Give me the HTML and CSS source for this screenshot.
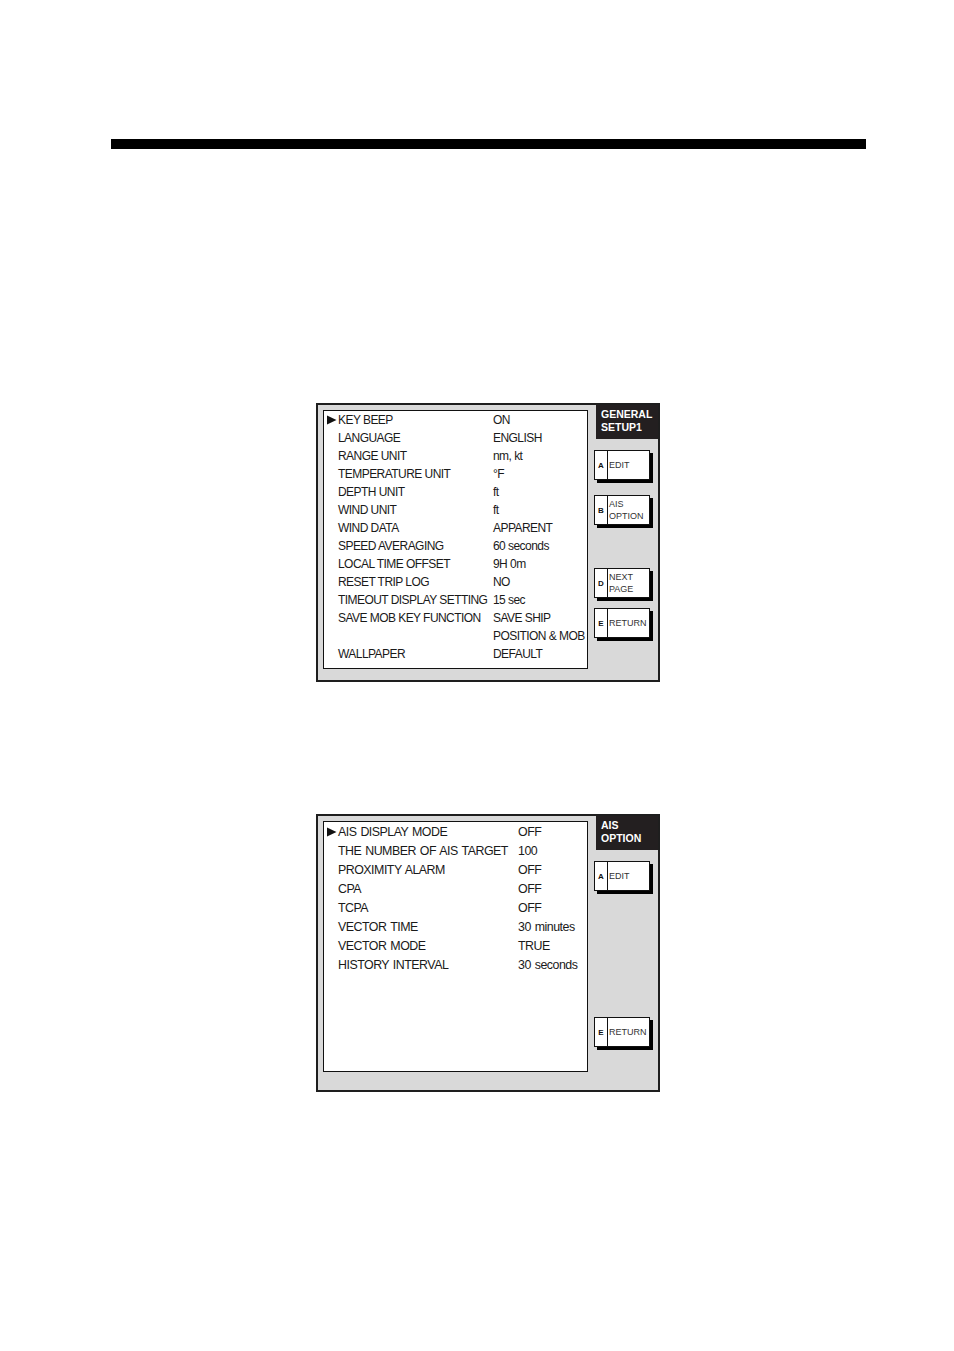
FILE: index.html
```html
<!DOCTYPE html>
<html>
<head>
<meta charset="utf-8">
<link rel="stylesheet" href="styles.css">
</head>
<body>
<div class="topbar"></div>

<div class="panel panel-general">
  <div class="list list-general">
    <div class="row"><span class="cursor"><svg width="10" height="10" viewBox="0 0 10 10"><path d="M0 0.5 L9.5 5 L0 9.5 Z" fill="#111"/></svg></span><span class="label">KEY BEEP</span><span class="value">ON</span></div>
    <div class="row"><span class="cursor"></span><span class="label">LANGUAGE</span><span class="value">ENGLISH</span></div>
    <div class="row"><span class="cursor"></span><span class="label">RANGE UNIT</span><span class="value">nm, kt</span></div>
    <div class="row"><span class="cursor"></span><span class="label">TEMPERATURE UNIT</span><span class="value">°F</span></div>
    <div class="row"><span class="cursor"></span><span class="label">DEPTH UNIT</span><span class="value">ft</span></div>
    <div class="row"><span class="cursor"></span><span class="label">WIND UNIT</span><span class="value">ft</span></div>
    <div class="row"><span class="cursor"></span><span class="label">WIND DATA</span><span class="value">APPARENT</span></div>
    <div class="row"><span class="cursor"></span><span class="label">SPEED AVERAGING</span><span class="value">60 seconds</span></div>
    <div class="row"><span class="cursor"></span><span class="label">LOCAL TIME OFFSET</span><span class="value">9H 0m</span></div>
    <div class="row"><span class="cursor"></span><span class="label">RESET TRIP LOG</span><span class="value">NO</span></div>
    <div class="row"><span class="cursor"></span><span class="label">TIMEOUT DISPLAY SETTING</span><span class="value">15 sec</span></div>
    <div class="row"><span class="cursor"></span><span class="label">SAVE MOB KEY FUNCTION</span><span class="value">SAVE SHIP</span></div>
    <div class="row"><span class="cursor"></span><span class="label"></span><span class="value">POSITION &amp; MOB</span></div>
    <div class="row"><span class="cursor"></span><span class="label">WALLPAPER</span><span class="value">DEFAULT</span></div>
  </div>
  <div class="side">
    <div class="title">GENERAL<br>SETUP1</div>
    <div class="key key-first"><span class="k">A</span><span class="t">EDIT</span></div>
    <div class="key key-b"><span class="k">B</span><span class="t">AIS<br>OPTION</span></div>
    <div class="key key-d"><span class="k">D</span><span class="t">NEXT<br>PAGE</span></div>
    <div class="key key-e"><span class="k">E</span><span class="t">RETURN</span></div>
  </div>
</div>

<div class="panel panel-ais">
  <div class="list list-ais">
    <div class="row"><span class="cursor"><svg width="10" height="10" viewBox="0 0 10 10"><path d="M0 0.5 L9.5 5 L0 9.5 Z" fill="#111"/></svg></span><span class="label">AIS DISPLAY MODE</span><span class="value">OFF</span></div>
    <div class="row"><span class="cursor"></span><span class="label">THE NUMBER OF AIS TARGET</span><span class="value">100</span></div>
    <div class="row"><span class="cursor"></span><span class="label">PROXIMITY ALARM</span><span class="value">OFF</span></div>
    <div class="row"><span class="cursor"></span><span class="label">CPA</span><span class="value">OFF</span></div>
    <div class="row"><span class="cursor"></span><span class="label">TCPA</span><span class="value">OFF</span></div>
    <div class="row"><span class="cursor"></span><span class="label">VECTOR TIME</span><span class="value">30 minutes</span></div>
    <div class="row"><span class="cursor"></span><span class="label">VECTOR MODE</span><span class="value">TRUE</span></div>
    <div class="row"><span class="cursor"></span><span class="label">HISTORY INTERVAL</span><span class="value">30 seconds</span></div>
  </div>
  <div class="side">
    <div class="title">AIS<br>OPTION</div>
    <div class="key key-first"><span class="k">A</span><span class="t">EDIT</span></div>
    <div class="key key-ais-e"><span class="k">E</span><span class="t">RETURN</span></div>
  </div>
</div>
</body>
</html>
```
FILE: styles.css
```css
html, body {
  margin: 0;
  padding: 0;
  background: #ffffff;
}
body {
  width: 954px;
  height: 1351px;
  font-family: "Liberation Sans", Arial, sans-serif;
  color: #1a1a1a;
  overflow: hidden;
}
.topbar {
  margin: 139px 0 0 111px;
  width: 755px;
  height: 10px;
  background: #000;
}
.panel {
  box-sizing: border-box;
  margin-left: 316px;
  width: 344px;
  border: 2px solid #1e1e1e;
  background: #d9d9d9;
  display: flex;
  align-items: flex-start;
}
.panel-general {
  margin-top: 254px;
  height: 279px;
}
.panel-ais {
  margin-top: 132px;
  height: 278px;
}
.list {
  box-sizing: border-box;
  margin: 5px 0 0 5px;
  width: 265px;
  background: #fff;
  border: 1px solid #111;
}
.list-general {
  height: 259px;
  font-size: 12px;
  letter-spacing: -0.55px;
}
.list-ais {
  height: 251px;
  font-size: 12.4px;
  letter-spacing: -0.5px;
  word-spacing: 1px;
}
.row {
  box-sizing: border-box;
  display: grid;
  align-items: center;
  white-space: nowrap;
}
.list-general .row {
  grid-template-columns: 14px 155px 1fr;
  height: 18px;
  padding-bottom: 1px;
}
.list-ais .row {
  grid-template-columns: 14px 180px 1fr;
  height: 19px;
}
.cursor {
  display: flex;
  align-items: center;
  padding-left: 3px;
  height: 10px;
}
.cursor svg {
  display: block;
}
.side {
  width: 70px;
  display: flex;
  flex-direction: column;
  align-items: flex-start;
}
.title {
  box-sizing: border-box;
  margin-left: 8px;
  width: 62px;
  height: 34px;
  background: #231f20;
  color: #fff;
  font-weight: bold;
  font-size: 10.5px;
  line-height: 13px;
  padding: 3px 0 0 5px;
}
.key {
  box-sizing: border-box;
  margin-left: 6px;
  width: 56px;
  height: 30px;
  background: #fff;
  border: 1px solid #111;
  box-shadow: 3px 3px 0 #000;
  display: flex;
  align-items: stretch;
}
.k {
  width: 12px;
  border-right: 1px solid #111;
  display: flex;
  align-items: center;
  justify-content: center;
  font-size: 8px;
  font-weight: bold;
  color: #111;
}
.t {
  display: flex;
  align-items: center;
  padding-left: 1px;
  font-size: 9px;
  line-height: 12px;
  color: #333;
}
.key-first { margin-top: 11px; }
.key-b { margin-top: 15px; }
.key-d { margin-top: 43px; }
.key-e { margin-top: 10px; }
.key-ais-e { margin-top: 126px; }
```
